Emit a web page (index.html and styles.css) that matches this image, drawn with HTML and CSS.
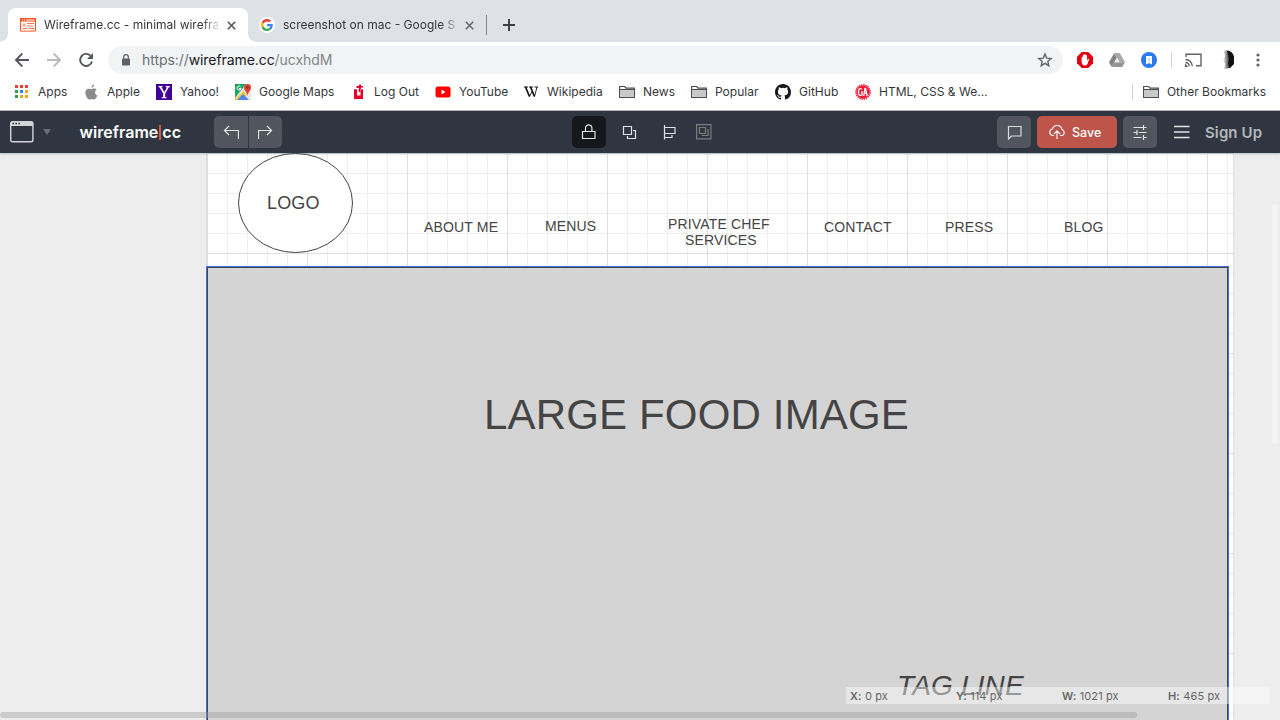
FILE: index.html
```html
<!DOCTYPE html>
<html lang="en">
<head>
<meta charset="utf-8">
<title>Wireframe.cc - minimal wireframing tool</title>
<link rel="stylesheet" href="styles.css">
</head>
<body>
<div class="tabs">
  <div class="tab active">
    <svg width="16" height="14" viewBox="0 0 16 14"><path d="M.5.5h15v12.600H.5z" fill="#fff" stroke="#f9541f"/><path d="M0 0h16v3.500H0z" fill="#f9541f"/><path d="M2 2h1M4 2h1M6 2h8.500" stroke="#fff"/><path d="M2.500 5.500h3v3h-3z" fill="#fba98c"/><path d="M7 5.500h7M7 8h6M2.500 10.500h5M9 10.500h5" stroke="#f9764b"/></svg>
    <span class="title">Wireframe.cc - minimal wirefram</span>
    <svg class="x" width="9" height="9" viewBox="0 0 9 9"><path d="M.8.8l7.400 7.400M8.200.8L.8 8.200" stroke="#505357" stroke-width="1.600"/></svg>
  </div>
  <div class="tab second">
    <span class="gicon"><svg width="12" height="12" viewBox="0 0 48 48"><path fill="#ea4335" d="M24 9.500c3.500 0 6.700 1.200 9.200 3.600l6.900-6.900A24 24 0 0 0 2.600 13.200l8 6.200C12.400 13.700 17.700 9.500 24 9.500z"/><path fill="#4285f4" d="M47 24.500c0-1.600-.2-3.100-.4-4.500H24v9h12.900a11 11 0 0 1-4.800 7.200l7.700 6c4.500-4.200 7.200-10.400 7.200-17.700z"/><path fill="#fbbc05" d="M10.500 28.600a14.500 14.500 0 0 1 0-9.200l-8-6.200a24 24 0 0 0 0 21.600z"/><path fill="#34a853" d="M24 48c6.500 0 11.900-2.100 15.900-5.800l-7.700-6A14.600 14.600 0 0 1 10.500 28.600l-8 6.200A24 24 0 0 0 24 48z"/></svg></span>
    <span class="title">screenshot on mac - Google Sea</span>
    <svg class="x" width="9" height="9" viewBox="0 0 9 9"><path d="M.8.8l7.400 7.400M8.200.8L.8 8.200" stroke="#606468" stroke-width="1.500"/></svg>
  </div>
  <i class="tabsep"></i>
  <svg class="plus" width="12" height="12" viewBox="0 0 12 12"><path d="M6 0v12M0 6h12" stroke="#3c4043" stroke-width="1.900"/></svg>
</div>
<div class="toolbar">
  <svg width="94" height="20" viewBox="0 0 94 20" fill="none" stroke-width="1.900"><path d="M15 10H2M8.300 3.500L2 10l6.300 6.500" stroke="#54585d"/><path d="M33 10h13M39.700 3.500L46 10l-6.300 6.500" stroke="#b9bbbe"/><path d="M76.500 5.700a6 6 0 1 0 1.500 5.800" stroke="#54585d"/><path d="M79 3v6h-6z" fill="#54585d"/></svg>
  <div class="omnibox">
    <svg width="10" height="13" viewBox="0 0 10 13"><rect x="1" y="4.500" width="8" height="7" rx="1" fill="#5f6368"/><path d="M2.700 5V3a2.300 2.300 0 0 1 4.600 0V5" fill="none" stroke="#5f6368" stroke-width="1.200"/></svg>
    <span class="url">https://<b>wireframe.cc</b><em>/ucxhdM</em></span>
    <svg class="star" width="16" height="16" viewBox="0 0 16 16"><path d="M8 2l1.700 4.100 4.400.4-3.300 2.900 1 4.300L8 11.400l-3.800 2.300 1-4.300L1.900 6.500l4.400-.4z" fill="none" stroke="#5f6368" stroke-width="1.400"/></svg>
  </div>
  <div class="extensions">
    <svg width="16" height="16" viewBox="0 0 16 16"><path d="M4.700 0h6.600L16 4.700v6.600L11.300 16H4.700L0 11.300V4.700z" fill="#e40313"/><path d="M4.600 9V5.200q.7-.9 1.300 0V7V3.300q.7-.9 1.300 0V7V2.500q.7-.9 1.400 0V7V3.500q.7-.9 1.400 0v5l1.300-1.700q.8-.2.700.7L10.500 12q-1 1.500-2.600 1.500Q4.700 13.500 4.600 9z" fill="#fff"/></svg>
    <svg width="16" height="14" viewBox="0 0 16 14"><path d="M5.300 0L0 9.300 2.700 14 8 4.700z" fill="#848484"/><path d="M5.300 0h5.400L16 9.300h-5.400z" fill="#a9a9a9"/><path d="M5.300 9.300H16L13.300 14H2.700z" fill="#969696"/><path d="M8 4.700l2.600 4.600H5.300z" fill="#efefef"/></svg>
    <svg width="16" height="16" viewBox="0 0 16 16"><circle cx="8" cy="8" r="8" fill="#2979ef"/><path d="M5 4h6v8.500L8 11l-3 1.500z" fill="#fff"/><path d="M6.700 5.700h2.600v3.800H6.700z" fill="#d3e3fc"/></svg>
    <i class="sep"></i>
    <svg width="17" height="14" viewBox="0 0 17 14" fill="none" stroke="#5f6368" stroke-width="1.400"><path d="M1 4V1.200h15v11.600h-5M.5 9.500A3.800 3.800 0 0 1 4.300 13.300M.5 6.500a6.800 6.800 0 0 1 6.800 6.800"/><path d="M.5 12v1.500H2z" fill="#5f6368"/></svg>
    <svg class="avatar" width="16" height="20" viewBox="0 0 16 20"><defs><linearGradient id="face"><stop offset="0" stop-color="#fff"/><stop offset=".6" stop-color="#333"/><stop offset="1" stop-color="#111"/></linearGradient></defs><path d="M3 1q5-2 8 1c3 3 3 9 2 12l-3 4-6 1 1-5-2-4 2-4z" fill="url(#face)"/><path d="M7 1q6 0 7 6v7l-4 4-2-4 1-5z" fill="#111"/></svg>
    <svg class="kebab" width="4" height="14" viewBox="0 0 4 14" fill="#5f6368"><circle cx="2" cy="2" r="1.600"/><circle cx="2" cy="7" r="1.600"/><circle cx="2" cy="12" r="1.600"/></svg>
  </div>
</div>
<div class="bookmarks">
  <span class="bm"><svg width="16" height="16" viewBox="0 0 16 16"><path d="M1 1h3v3H1zM6 1h3v3H6zM11 1h3v3h-3z" fill="#ee3a35"/><path d="M1 6h3v3H1zM1 11h3v3H1z" fill="#2ba24c"/><path d="M6 6h3v3H6z" fill="#3b7df0"/><path d="M6 11h3v3H6zM11 6h3v3h-3zM11 11h3v3h-3z" fill="#f5a51d"/></svg>Apps</span>
  <span class="bm"><svg width="16" height="16" viewBox="0 0 16 16"><path d="M8.500 4Q8.400 1.200 11 0q.4 2.800-2.500 4zM8.400 5c1 0 3-1.600 5.300.6-2.400 1.700-1.900 5 .6 6C13 15 11.800 15.800 10.700 15.400 9 14.700 8.500 14.700 7 15.400 4.500 16.200 1 9.500 3 6.300 4.700 3.700 7 5 8.400 5z" fill="#8b8b8b"/></svg>Apple</span>
  <span class="bm"><svg width="16" height="16" viewBox="0 0 16 16"><path d="M0 0h16v16H0z" fill="#430297"/><path d="M2.500 2h4v1l-1 .3L8.400 8l2.500-4.500-1.200-.5V2H14v1l-1.300.5-3.500 6V13l1.500.5v.8H5.600v-.8L7.200 13V9.500L3.600 3.400 2.500 3z" fill="#fff"/></svg>Yahoo!</span>
  <span class="bm"><svg width="16" height="16" viewBox="0 0 16 16"><path d="M0 0h16v16H0z" fill="#e8e8e3"/><path d="M0 0h11L0 14z" fill="#22a366"/><path d="M0 15L8.500 7 12 11l-8 5H0z" fill="#f6c83c"/><path d="M2 16l6-6 6 6z" fill="#4a87ee"/><path d="M12.500 12C12 7.500 9 7 9 3.500a3.500 3.500 0 0 1 7 0C16 7 13 7.500 12.500 12z" fill="#df4138"/><circle cx="12.500" cy="3.500" r="1.200" fill="#8b2925"/><path d="M5.600 2.800A2 2 0 1 0 6 4.500H4" stroke="#fff" fill="none"/></svg>Google Maps</span>
  <span class="bm"><svg width="16" height="16" viewBox="0 0 16 16"><path d="M4 5.500h2.500v7h5v-7H13V15H4z" fill="#e9002a"/><path d="M4 5.500h3v6h3.500v-6H13V15H4z" fill="#e9002a"/><path d="M8.700 5h1.600v3H8.700zM9 .5h2V2h2v1.500h-2V5H9V4H6.500V2H9z" fill="#e9002a"/></svg>Log Out</span>
  <span class="bm"><svg width="16" height="16" viewBox="0 0 16 16"><rect x=".5" y="2.500" width="15" height="11" rx="2.500" fill="#f00"/><path d="M6.500 5.500v5l4-2.500z" fill="#fff"/></svg>YouTube</span>
  <span class="bm"><svg width="16" height="16" viewBox="0 0 16 16" fill="none" stroke="#111"><path d="M1 3h4M6 3h4M11.500 3H15"/><path d="M2.500 3L6.500 12.500M7.500 3l4 9.500" stroke-width="1.700"/><path d="M6.500 12.500L9 7.500M11.500 12.500L14 3" stroke-width=".9"/></svg>Wikipedia</span>
  <span class="bm"><svg width="16" height="16" viewBox="0 0 16 16"><path d="M.6 13.500v-11h5l1.500 1.700h8.300v9.300z" fill="#fff" stroke="#4d4d4d" stroke-width="1.200"/><path d="M1.200 6h13.600v7H1.200z" fill="#c8c8c8"/><path d="M1 5.500h14" stroke="#4d4d4d"/></svg>News</span>
  <span class="bm"><svg width="16" height="16" viewBox="0 0 16 16"><path d="M.6 13.500v-11h5l1.500 1.700h8.300v9.300z" fill="#fff" stroke="#4d4d4d" stroke-width="1.200"/><path d="M1.200 6h13.600v7H1.200z" fill="#c8c8c8"/><path d="M1 5.500h14" stroke="#4d4d4d"/></svg>Popular</span>
  <span class="bm"><svg width="16" height="16" viewBox="0 0 16 16"><path fill="#191717" d="M8 0C3.580 0 0 3.580 0 8c0 3.540 2.290 6.530 5.470 7.590.4.070.55-.17.55-.38 0-.19-.01-.82-.01-1.490-2.010.37-2.530-.49-2.690-.94-.09-.23-.48-.94-.82-1.130-.28-.15-.68-.52-.01-.53.63-.01 1.080.58 1.230.82.72 1.210 1.870.87 2.330.66.070-.52.28-.87.51-1.070-1.780-.2-3.640-.89-3.640-3.950 0-.87.31-1.590.82-2.150-.08-.2-.36-1.020.08-2.120 0 0 .67-.21 2.200.82a7.600 7.600 0 0 1 4 0c1.530-1.040 2.200-.82 2.200-.82.44 1.100.16 1.920.08 2.120.51.56.82 1.270.82 2.150 0 3.070-1.870 3.750-3.650 3.950.29.25.54.73.54 1.480 0 1.070-.01 1.930-.01 2.200 0 .21.15.46.55.38A8 8 0 0 0 16 8c0-4.420-3.580-8-8-8z"/></svg>GitHub</span>
  <span class="bm"><svg width="16" height="16" viewBox="0 0 16 16"><circle cx="8" cy="8" r="6.500" fill="#f01837"/><circle cx="8" cy="8" r="7" fill="none" stroke="#f01837" stroke-width="1.600" stroke-dasharray="1.500 .7"/><path d="M7 5Q3.500 3.500 3.500 8T7 11V8H6M8.700 12L10 4.500h.6L12.100 12M9.400 9h2" stroke="#fff" stroke-width="1.300" fill="none"/></svg>HTML, CSS &amp; We...</span>
  <span class="bm other"><svg width="16" height="16" viewBox="0 0 16 16"><path d="M.6 13.500v-11h5l1.500 1.700h8.300v9.300z" fill="#fff" stroke="#4d4d4d" stroke-width="1.200"/><path d="M1.200 6h13.600v7H1.200z" fill="#c8c8c8"/><path d="M1 5.500h14" stroke="#4d4d4d"/></svg>Other Bookmarks</span>
</div>
<header class="app">
  <svg class="window" width="42" height="22" viewBox="0 0 42 22"><rect x=".7" y=".7" width="22.200" height="20" rx="1.800" fill="none" stroke="#d2d4d6" stroke-width="1.400"/><path d="M1 1h22v4H1z" fill="#d2d4d6"/><path d="M2.500 2.500h1.500M5.500 2.500H7M8.500 2.500H10" stroke="#303641" stroke-width="1.500"/><path d="M33 8h8l-4 6z" fill="#696d73"/></svg>
  <div class="brand">wireframe<i></i>cc</div>
  <div class="history">
    <span class="btn"><svg width="16" height="14" viewBox="0 0 16 14" fill="none" stroke="#e2e3e4" stroke-width="1.200"><path d="M6 1L1.500 5.500 6 10M1.500 5.500h14V14"/></svg></span>
    <span class="btn"><svg width="16" height="14" viewBox="0 0 16 14" fill="none" stroke="#e2e3e4" stroke-width="1.200"><path d="M9 1l4.500 4.500L9 10M13.500 5.500H.5V14"/></svg></span>
  </div>
  <div class="tools">
    <span class="btn lock"><svg width="16" height="16" viewBox="0 0 16 16" fill="none" stroke="#e0e1e2" stroke-width="1.200"><path d="M1.500 7.500h12.500v7H1.500zM4.500 7.500V4a3.200 3.200 0 0 1 6.400 0v3.500"/></svg></span>
    <svg width="15" height="15" viewBox="0 0 15 15" fill="none" stroke="#e0e1e2" stroke-width="1.200"><path d="M1.500 1.500h8v8h-8zM11 5.500h2.500v8h-8V11"/></svg>
    <svg class="align" width="14" height="16" viewBox="0 0 14 16" fill="none" stroke="#e0e1e2" stroke-width="1.200"><path d="M1.500 1v14.500M1.500 3.500h10.500v6H1.500M1.500 13.500h7.500V11"/></svg>
    <svg class="group" width="16" height="16" viewBox="0 0 16 16" fill="none" stroke="#797c7c" stroke-width="1.200"><path d="M.6.6h14.300v14.300H.6zM3.500 3.500h6v6h-6zM12 5v6.500H5.500"/></svg>
  </div>
  <div class="actions">
    <span class="btn comment"><svg width="15" height="15" viewBox="0 0 15 15" fill="none" stroke="#d9dadb" stroke-width="1.200"><path d="M1.500 1.500h12.500v9.500H4.500L1.500 14z"/></svg></span>
    <span class="save"><svg width="16" height="14" viewBox="0 0 16 14" fill="none" stroke="#fff" stroke-width="1.100"><path d="M5 10.500H4A3.300 3.300 0 0 1 3.300 4 5 5 0 0 1 13 4.500a3.300 3.300 0 0 1 .5 6H11M8 14V6M5 9l3-3.200L11 9"/></svg>Save</span>
    <span class="btn"><svg width="16" height="16" viewBox="0 0 16 16" fill="none" stroke="#e2e3e4" stroke-width="1.200"><path d="M1.500 3.500h10M11.500 3.500h3M11.500 1v5M1.500 8.500h3M7 8.500h7.500M5 6v5M1.500 13.500h8M12 13.500h2.500M11.500 11v5"/></svg></span>
    <svg class="menu" width="16" height="14" viewBox="0 0 16 14"><path d="M0 1.500h15.500M0 7h15.500M0 12.500h15.500" stroke="#e1e2e3" stroke-width="1.500"/></svg>
    <span class="signup">Sign Up</span>
  </div>
</header>
<main class="workspace">
  <div class="page">
    <svg class="logo" width="116" height="101" viewBox="0 0 116 101"><ellipse cx="58.500" cy="50" rx="57" ry="49.500" fill="#fff" stroke="#444"/></svg>
    <span class="label logo-text">LOGO</span>
    <span class="label about">ABOUT ME</span>
    <span class="label menus">MENUS</span>
    <span class="label chef">PRIVATE CHEF</span>
    <span class="label services">SERVICES</span>
    <span class="label contact">CONTACT</span>
    <span class="label press">PRESS</span>
    <span class="label blog">BLOG</span>
    <div class="hero"></div>
    <span class="label hero-text">LARGE FOOD IMAGE</span>
    <span class="label tagline">TAG LINE</span>
  </div>
  <div class="status"><span><b>X:</b> 0 px</span><span><b>Y:</b> 114 px</span><span><b>W:</b> 1021 px</span><span><b>H:</b> 465 px</span></div>
  <i class="vscroll"></i><i class="hscroll"></i>
</main>
</body>
</html>
```
FILE: styles.css
```css
* { box-sizing: border-box; }
body { margin: 0; width: 1280px; height: 720px; overflow: hidden; background: #fff; font-family: Inter, "Noto Sans", sans-serif; color: #35363a; }
svg { display: block; flex: none; }
.tabs { height: 42px; background: #dee1e6; display: flex; align-items: flex-end; padding-left: 8px; }
.tab { position: relative; width: 240px; height: 34px; display: flex; align-items: center; padding: 0 12px; font-size: 12px; letter-spacing: 0; }
.tab.active { background: #fff; border-radius: 8px 8px 0 0; }
.tab.active::before, .tab.active::after { content: ""; position: absolute; bottom: 0; width: 8px; height: 8px; }
.tab.active::before { left: -8px; background: radial-gradient(circle at 0 0, transparent 7.500px, #fff 8px); }
.tab.active::after { right: -8px; background: radial-gradient(circle at 100% 0, transparent 7.500px, #fff 8px); }
.title { width: 175px; margin-left: 8px; padding-bottom: 2px; white-space: nowrap; overflow: hidden; mask-image: linear-gradient(90deg, #000 158px, transparent 178px); }
.x { margin-left: 9px; }
.second { width: 238px; padding-left: 11px; }
.second .x { margin-left: 9px; }
.gicon { width: 16px; height: 16px; border-radius: 8px; background: #fff; display: grid; place-items: center; flex: none; }
.tabsep { width: 1px; height: 20px; background: #80848a; margin-bottom: 7px; }
.plus { margin: 0 0 11px 16px; }
.toolbar { height: 36px; display: flex; align-items: center; padding-left: 14px; }
.omnibox { width: 955px; height: 28px; border-radius: 14px; background: #f1f3f4; display: flex; align-items: center; padding: 0 10px 0 13px; }
.url { margin-left: 11px; padding-bottom: 2px; font-size: 14px; color: #6a6f74; letter-spacing: -.07px; }
.url b { font-weight: 400; color: #202124; }
.url em { font-style: normal; color: #80868b; }
.star { margin-left: auto; }
.extensions { display: flex; align-items: center; gap: 16px; padding-left: 14px; }
.sep { width: 1px; height: 16px; background: #d0d2d5; margin: 0 -3px 0 -2px; }
.avatar { margin-left: 2px; }
.kebab { margin-left: 4px; }
.bookmarks { height: 33px; padding: 0 14px 5px 14px; border-bottom: 1px solid #b8b3b5; display: grid; grid-template-columns: 69px 73px 79px 115px 85px 88px 96px 72px 84px 80px 1fr auto; align-items: center; font-size: 12px; letter-spacing: .02px; }
.bm { display: flex; align-items: center; gap: 8px; white-space: nowrap; }
.other { border-left: 1px solid #ced0d3; padding-left: 10px; height: 16px; }
.app { position: relative; z-index: 2; height: 42px; background: #303641; display: flex; align-items: center; padding-left: 10px; box-shadow: 0 1px 2px #0003; }
.brand { width: 105px; margin-left: 27.500px; display: flex; align-items: center; color: #fff; font-size: 16px; font-weight: 600; letter-spacing: .03px; }
.brand i { width: 2px; height: 15px; background: #d95548; margin: 0 1px; }
.btn { width: 34px; height: 32px; border-radius: 5px; background: #51565e; display: grid; place-items: center; flex: none; }
.history { margin-left: 29.500px; display: flex; gap: 1px; }
.history .btn:first-child { border-radius: 5px 0 0 5px; }
.history .btn:last-child { width: 33px; border-radius: 0 5px 5px 0; }
.tools { margin-left: 290px; display: flex; align-items: center; }
.tools .lock { background: #14181b; margin-right: 16px; }
.tools .align { margin-left: 26px; }
.tools .group { margin-left: 19px; }
.actions { margin-left: 285px; display: flex; align-items: center; flex: none; }
.save { width: 80px; height: 32px; margin: 0 6px; padding-left: 12px; gap: 7px; border-radius: 5px; background: #bd554a; display: flex; align-items: center; color: #fff; font-size: 12.500px; font-weight: 500; }
.menu { margin-left: 17px; }
.signup { margin-left: 15px; font-size: 15px; font-weight: 600; color: #b5b7ba; letter-spacing: .1px; }
.workspace { position: relative; height: 567px; background: #ededed; overflow: hidden; }
.page { position: relative; width: 1028px; height: 567px; margin-left: 206px; border: solid #dedede; border-width: 0 1px; background-color: #fff;
  background-image: linear-gradient(90deg, #dfdfdf 1px, transparent 1px), linear-gradient(#dfdfdf 1px, transparent 1px), linear-gradient(90deg, #ededed 1px, transparent 1px), linear-gradient(#ededed 1px, transparent 1px);
  background-size: 100px 100px, 100px 100px, 20px 20px, 20px 20px; }
.logo { position: absolute; left: 30px; top: 0; }
.label { position: absolute; font-family: "Liberation Sans", Arial, sans-serif; font-size: 14px; line-height: 16px; letter-spacing: .16px; color: #444; white-space: nowrap; }
.logo-text { left: 60px; top: 40px; font-size: 18px; line-height: 20px; }
.about { left: 217px; top: 66px; }
.menus { left: 338px; top: 65px; }
.chef { left: 461px; top: 63px; }
.services { left: 478px; top: 79px; }
.contact { left: 617px; top: 66px; }
.press { left: 738px; top: 66px; }
.blog { left: 857px; top: 66px; }
.hero { position: absolute; left: -1px; top: 113px; width: 1023px; height: 467px; background: #d4d4d4; border: 1px solid #3e70ee; box-shadow: inset 0 0 0 1px #444; }
.hero-text { left: 277px; top: 238px; font-size: 42px; line-height: 48px; }
.tagline { left: 690px; top: 517px; font-size: 28px; line-height: 32px; font-style: italic; }
.status { position: absolute; left: 846px; top: 534px; width: 424px; height: 17px; padding-left: 4px; display: grid; grid-template-columns: repeat(4, 106px); align-items: center; background: #ffffff73; font-size: 11px; letter-spacing: .13px; color: #666; }
.status b { font-weight: 600; }
.vscroll { position: absolute; left: 1272px; top: 51px; width: 6px; height: 240px; border-radius: 3px; background: #f4f4f4; }
.hscroll { position: absolute; left: 0; top: 559px; width: 1137px; height: 6px; border-radius: 3px; background: #9996; }
```
